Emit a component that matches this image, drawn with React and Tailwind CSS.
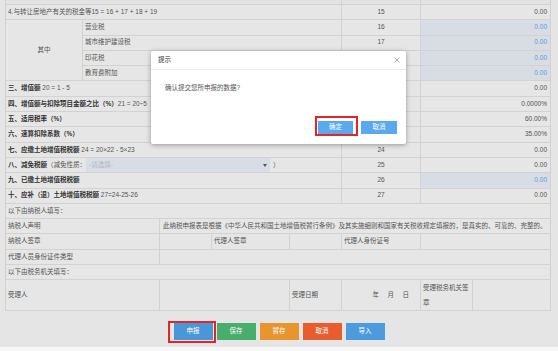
import React from "react";

const C = "bg-[#e6e6e6] flex items-center pl-[2px] pr-[3px] text-[#555] whitespace-nowrap overflow-hidden";
const NUM = "bg-[#e6e6e6] flex items-center justify-center text-[#555]";
const VAL = "col-span-2 bg-[#e6e6e6] flex items-center justify-end pr-[3px] text-[#555]";
const VALB = "col-span-2 bg-[#d8dde5] flex items-center justify-end pr-[3px] text-[#5b9bd6]";

function Row({ label, num, val, blue, span = "col-span-5" }) {
  return (
    <>
      <div className={`${C} ${span}`}>{label}</div>
      <div className={NUM}>{num}</div>
      <div className={blue ? VALB : VAL}>{val}</div>
    </>
  );
}

export default function App() {
  return (
    <div className="relative w-[558px] h-[351px] overflow-hidden bg-[#e5e5e5] font-['Liberation_Sans','Noto_Sans_CJK_SC',sans-serif] text-[6.5px] leading-none flex flex-col">
      <div className="ml-[5px] w-[546px] grid grid-cols-[76px_76px_51px_77px_51px_78px_51px_77px] grid-rows-[4px_repeat(20,14.3px)] gap-px bg-[#d2d2d2] px-px pb-px">
        {/* partial row */}
        <div className="col-span-5 bg-[#e3e3e3]" />
        <div className="bg-[#e3e3e3]" />
        <div className="col-span-2 bg-[#e3e3e3]" />

        <Row label="4.与转让房地产有关的税金等15 = 16 + 17 + 18 + 19" num="15" val="0.00" />

        <div className="row-span-4 bg-[#e6e6e6] flex items-center justify-center text-[#555]">其中</div>
        <Row span="col-span-4" label="营业税" num="16" val="0.00" blue />
        <Row span="col-span-4" label="城市维护建设税" num="17" val="0.00" blue />
        <Row span="col-span-4" label="印花税" num="18" val="0.00" blue />
        <Row span="col-span-4" label="教育费附加" num="19" val="0.00" blue />

        <Row label={<><b className="text-[#333]">三、增值额</b>&nbsp;20 = 1 - 5</>} num="20" val="0.00" />
        <Row label={<><b className="text-[#333]">四、增值额与扣除项目金额之比（%）</b>21 = 20÷5</>} num="21" val="0.0000%" />
        <Row label={<b className="text-[#333]">五、适用税率（%）</b>} num="22" val="60.00%" />
        <Row label={<b className="text-[#333]">六、速算扣除系数（%）</b>} num="23" val="35.00%" />
        <Row label={<><b className="text-[#333]">七、应缴土地增值税税额</b>&nbsp;24 = 20×22 - 5×23</>} num="24" val="0.00" />

        <div className={`${C} col-span-5 items-stretch`}>
          <span className="flex items-center"><b className="text-[#333]">八、减免税额</b>（减免性质：</span>
          <div className="w-[184px] bg-[#d8dde5] flex items-center justify-between pl-[3px] pr-[3px]">
            <span className="text-[#b3b8c0]">-请选择-</span>
            <svg width="4" height="3" viewBox="0 0 4 3"><path d="M0 0H4L2 3Z" fill="#555" /></svg>
          </div>
          <span className="flex items-center ml-[3px]">）</span>
        </div>
        <div className={NUM}>25</div>
        <div className={VAL}>0.00</div>

        <Row label={<b className="text-[#333]">九、已缴土地增值税税额</b>} num="26" val="0.00" blue />
        <Row label={<><b className="text-[#333]">十、应补（退）土地增值税税额</b>&nbsp;27=24-25-26</>} num="27" val="0.00" />

        <div className={`${C} col-span-8`}>以下由纳税人填写：</div>

        <div className={`${C} col-span-2`}>纳税人声明</div>
        <div className={`${C} col-span-6 pl-[3px]`}>此纳税申报表是根据《中华人民共和国土地增值税暂行条例》及其实施细则和国家有关税收规定填报的，是真实的、可靠的、完整的。</div>

        <div className={`${C} col-span-2`}>纳税人签章</div>
        <div className={C} />
        <div className={C}>代理人签章</div>
        <div className={C} />
        <div className={`${C} pl-[1px]`}>代理人身份证号</div>
        <div className={`${C} col-span-2`} />

        <div className={`${C} col-span-2`}>代理人员身份证件类型</div>
        <div className={`${C} col-span-6`} />

        <div className={`${C} col-span-8`}>以下由税务机关填写：</div>

        <div className={`${C} col-span-2 row-span-2`}>受理人</div>
        <div className={`${C} col-span-2 row-span-2`} />
        <div className={`${C} row-span-2`}>受理日期</div>
        <div className={`${C} row-span-2 justify-end gap-[8.5px] pr-[11px]`}>
          <span>年</span><span>月</span><span>日</span>
        </div>
        <div className="row-span-2 bg-[#e6e6e6] flex items-center pl-[2px] text-[#555] leading-[15px] whitespace-normal break-all">受理税务机关签章</div>
        <div className={`${C} row-span-2`} />
      </div>

      <div className="mt-[12px] flex justify-center gap-[4px] text-white">
        <div className="relative">
          <div className="w-[39px] h-[17px] bg-[#4a97d8] flex items-center justify-center">申报</div>
          <div className="absolute -left-[6px] -right-[3px] -top-[2px] -bottom-[3px] border-2 border-[#e3242b]" />
        </div>
        <div className="w-[39px] h-[17px] bg-[#48ae6b] flex items-center justify-center">保存</div>
        <div className="w-[39px] h-[17px] bg-[#e69530] flex items-center justify-center">暂存</div>
        <div className="w-[39px] h-[17px] bg-[#e85d2e] flex items-center justify-center">取消</div>
        <div className="w-[39px] h-[17px] bg-[#4c9bdc] flex items-center justify-center">导入</div>
      </div>

      <div className="mt-auto h-[4px] bg-[#f7f7f7]" />

      {/* modal */}
      <div className="absolute left-[151px] top-[51px] w-[255px] h-[93px] bg-white rounded-[2px] shadow-[0_1px_5px_rgba(0,0,0,0.35)] flex flex-col">
        <div className="h-[19px] border-b border-[#eeeeee] flex items-center justify-between pl-[7px] pr-[6px] text-[#333]">
          <span>提示</span>
          <svg width="6" height="6" viewBox="0 0 6 6"><path d="M0.5 0.5L5.5 5.5M5.5 0.5L0.5 5.5" stroke="#999" strokeWidth="0.8" /></svg>
        </div>
        <div className="flex-1 pl-[14px] pt-[15px] text-[#555]">确认提交您所申报的数据?</div>
        <div className="flex justify-end gap-[8px] pr-[9px] pb-[10px] text-white">
          <div className="relative">
            <div className="w-[35px] h-[13px] bg-[#5aa9ef] flex items-center justify-center">确定</div>
            <div className="absolute -left-[3px] -right-[5px] -top-[5px] -bottom-[2px] border-2 border-[#e3242b]" />
          </div>
          <div className="w-[36px] h-[13px] bg-[#5aa9ef] flex items-center justify-center">取消</div>
        </div>
      </div>
    </div>
  );
}
